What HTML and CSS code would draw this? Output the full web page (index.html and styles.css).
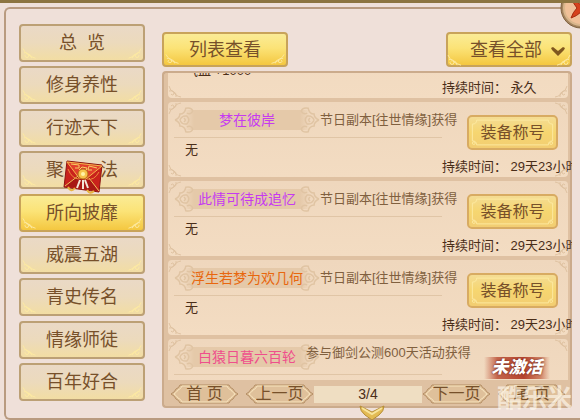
FILE: index.html
```html
<!DOCTYPE html>
<html lang="zh-CN">
    <head>
        <meta charset="utf-8">
        <title>称号</title>

        <link rel="stylesheet" href="styles.css">
    </head>

    <body>
        <svg class="symbols" aria-hidden="true">
            <symbol id="trim" viewBox="0 0 126 38" preserveAspectRatio="none">
                <g fill="none" stroke="currentColor" stroke-width="1">
                    <path d="M2 25 Q5 33 15 36 M3 30 Q7 29 8 33 Q8 36 5 35 Q3 33 5 32 M7 31 Q11 32 11 36"/>
                    <path d="M124 25 Q121 33 111 36 M123 30 Q119 29 118 33 Q118 36 121 35 Q123 33 121 32 M119 31 Q115 32 115 36"/>
                </g>
            </symbol>
            <symbol id="equip-trim" viewBox="0 0 91 35" preserveAspectRatio="none">
                <g fill="none" stroke="currentColor" stroke-width="1">
                    <path d="M8 3.5 H83 Q83 8 87.5 8 V27 Q83 27 83 31.5 H8 Q8 27 3.5 27 V8 Q8 8 8 3.5 Z"/>
                    <circle cx="5" cy="29.5" r="1.5"/>
                    <circle cx="86" cy="29.5" r="1.5"/>
                </g>
            </symbol>
            <symbol id="edge" viewBox="0 0 16 75">
                <g fill="none" stroke="currentColor" stroke-width="1">
                    <path d="M1 12 Q2 7 6 6 Q7 2 13 1 M1 7 Q6 8 6 4 Q4 2 3 4 M8 1 Q9 5 6 6"/>
                    <path d="M1 63 Q2 68 6 69 Q7 73 13 74 M1 68 Q6 67 6 71 Q4 73 3 71 M8 74 Q9 70 6 69"/>
                </g>
            </symbol>
            <symbol id="plaque" viewBox="0 0 148 28">
                <g fill="none" stroke="currentColor" stroke-width="1.5">
                    <path d="M1 14 Q6 12 6 8 Q11 8 12 2 Q18 1 19 5 Q17 9 13 7 M1 14 Q6 16 6 20 Q11 20 12 26 Q18 27 19 23 Q17 19 13 21"/>
                    <path d="M6 14 Q8 9 13 10 Q17 14 13 18 Q8 19 6 14 M10 12 Q13 14 10 16"/>
                    <path d="M147 14 Q142 12 142 8 Q137 8 136 2 Q130 1 129 5 Q131 9 135 7 M147 14 Q142 16 142 20 Q137 20 136 26 Q130 27 129 23 Q131 19 135 21"/>
                    <path d="M142 14 Q140 9 135 10 Q131 14 135 18 Q140 19 142 14 M138 12 Q135 14 138 16"/>
                </g>
            </symbol>
            <symbol id="hex" viewBox="0 0 69 20">
                <path d="M1 10 Q5 8 6 5 Q9 4 10 1 H59 Q60 4 63 5 Q64 8 68 10 Q64 12 63 15 Q60 16 59 19 H10 Q9 16 6 15 Q5 12 1 10 Z" fill="#dfc09a" stroke="#b38d62"/>
                <path d="M4 10 Q7 8 8 6 Q11 5 12 2 H57 Q58 5 61 6 Q62 8 65 10 Q62 12 61 14 Q58 15 57 18 H12 Q11 15 8 14 Q7 12 4 10 Z" fill="none" stroke="#f8e4bd"/>
            </symbol>
        </svg>

        <div class="window">
            <div class="frame">
                <nav class="tabs">
                    <button class="tab"><svg class="trim"><use href="#trim"/></svg>总&nbsp; 览</button>
                    <button class="tab"><svg class="trim"><use href="#trim"/></svg>修身养性</button>
                    <button class="tab"><svg class="trim"><use href="#trim"/></svg>行迹天下</button>
                    <button class="tab">
                        <svg class="trim"><use href="#trim"/></svg>聚　　法
                        <svg class="envelope" viewBox="0 0 42 36" aria-hidden="true">
                            <path d="M5 2 L40 6 L37 33 L2 28 Z" fill="#c9221c" stroke="#8c150f"/>
                            <path d="M3 27 L17 15 L27 17 L36 32 Z" fill="#a81814"/>
                            <path d="M5 3 L40 7 L24 20 L17 19 Z" fill="#e2402c" stroke="#f4b84c"/>
                            <path d="M3 27 L16 17 M37 32 L27 19" stroke="#f2c25a" fill="none"/>
                            <path d="M9 5 L17 6 V9 H13 M35 9 L27 7 L26 11 L30 11 M17 11 L20 8 L25 9 L24 12" stroke="#f7cf62" fill="none"/>
                            <path d="M6 10 Q10 20 17 20 M37 13 Q32 22 25 20" stroke="#ee8b3a" fill="none"/>
                            <circle cx="21" cy="15" r="5" fill="#f6c44c" stroke="#b86a1c"/>
                            <circle cx="21" cy="15" r="2" fill="#fff3a8"/>
                            <path d="M18 21 L15 29 M21 21 V30 M23 21 L26 29" stroke="#f3e6d8" stroke-width="2" fill="none"/>
                            <path d="M6 28 Q9 34 13 29 M25 31 Q28 36 32 32" stroke="#e8b440" stroke-width="2" fill="none"/>
                        </svg>
                    </button>
                    <button class="tab gold"><svg class="trim"><use href="#trim"/></svg>所向披靡</button>
                    <button class="tab"><svg class="trim"><use href="#trim"/></svg>威震五湖</button>
                    <button class="tab"><svg class="trim"><use href="#trim"/></svg>青史传名</button>
                    <button class="tab"><svg class="trim"><use href="#trim"/></svg>情缘师徒</button>
                    <button class="tab"><svg class="trim"><use href="#trim"/></svg>百年好合</button>
                </nav>

                <main class="content">
                    <div class="toolbar">
                        <button class="tool gold"><svg class="trim"><use href="#trim"/></svg>列表查看</button>
                        <div class="filter">
                            <select class="tool gold" aria-label="筛选">
                                <option>查看全部</option>
                            </select>
                            <svg class="trim"><use href="#trim"/></svg>
                            <svg class="arrow" viewBox="0 0 14 9" aria-hidden="true">
                                <path d="M0 1 L2 0 L7 4 L12 0 L14 1 L13 3 L7 9 L1 3 Z" fill="#80571f"/>
                            </svg>
                        </div>
                    </div>

                    <section class="panel">
                        <div class="list">
                            <div class="track">
                                <article class="entry">
                                    <svg class="edge"><use href="#edge"/></svg>
                                    <svg class="edge edge-right"><use href="#edge"/></svg>
                                    <div class="info">
                                        <div class="head"></div>
                                        <div class="bonus">气血 +1000</div>
                                    </div>
                                    <div class="side">
                                        <div class="time">持续时间： 永久</div>
                                    </div>
                                </article>

                                <article class="entry">
                                    <svg class="edge"><use href="#edge"/></svg>
                                    <svg class="edge edge-right"><use href="#edge"/></svg>
                                    <div class="info">
                                        <div class="head">
                                            <div class="name purple"><svg class="plaque"><use href="#plaque"/></svg>梦在彼岸</div>
                                            <div class="source">节日副本[往世情缘]获得</div>
                                        </div>
                                        <div class="bonus">无</div>
                                    </div>
                                    <div class="side">
                                        <button class="equip"><svg class="trim"><use href="#equip-trim"/></svg>装备称号</button>
                                        <div class="time">持续时间： 29天23小时</div>
                                    </div>
                                </article>

                                <article class="entry">
                                    <svg class="edge"><use href="#edge"/></svg>
                                    <svg class="edge edge-right"><use href="#edge"/></svg>
                                    <div class="info">
                                        <div class="head">
                                            <div class="name purple"><svg class="plaque"><use href="#plaque"/></svg>此情可待成追忆</div>
                                            <div class="source">节日副本[往世情缘]获得</div>
                                        </div>
                                        <div class="bonus">无</div>
                                    </div>
                                    <div class="side">
                                        <button class="equip"><svg class="trim"><use href="#equip-trim"/></svg>装备称号</button>
                                        <div class="time">持续时间： 29天23小时</div>
                                    </div>
                                </article>

                                <article class="entry">
                                    <svg class="edge"><use href="#edge"/></svg>
                                    <svg class="edge edge-right"><use href="#edge"/></svg>
                                    <div class="info">
                                        <div class="head">
                                            <div class="name orange"><svg class="plaque"><use href="#plaque"/></svg>浮生若梦为欢几何</div>
                                            <div class="source">节日副本[往世情缘]获得</div>
                                        </div>
                                        <div class="bonus">无</div>
                                    </div>
                                    <div class="side">
                                        <button class="equip"><svg class="trim"><use href="#equip-trim"/></svg>装备称号</button>
                                        <div class="time">持续时间： 29天23小时</div>
                                    </div>
                                </article>

                                <article class="entry locked">
                                    <svg class="edge"><use href="#edge"/></svg>
                                    <svg class="edge edge-right"><use href="#edge"/></svg>
                                    <div class="info">
                                        <div class="head">
                                            <div class="name pink"><svg class="plaque"><use href="#plaque"/></svg>白猿日暮六百轮</div>
                                            <div class="source">参与御剑公测600天活动获得</div>
                                        </div>
                                    </div>
                                    <div class="side">
                                        <div class="stamp">未激活</div>
                                    </div>
                                </article>
                            </div>
                        </div>

                        <div class="pager">
                            <button class="page"><svg class="hex"><use href="#hex"/></svg>首 页</button>
                            <button class="page"><svg class="hex"><use href="#hex"/></svg>上一页</button>
                            <div class="count">3/4</div>
                            <button class="page"><svg class="hex"><use href="#hex"/></svg>下一页</button>
                            <button class="page"><svg class="hex"><use href="#hex"/></svg>尾 页</button>
                        </div>

                        <svg class="more" viewBox="0 0 28 16" aria-hidden="true">
                            <path d="M2 1 L14 7 L26 1 Q26 6 21 10 L14 15 L7 10 Q2 6 2 1 Z" fill="#e3bb54" stroke="#b58d36"/>
                            <path d="M4 3 L14 9 L24 3" fill="none" stroke="#f8e49a" stroke-width="2"/>
                        </svg>
                        <div class="mark">酷乐米</div>
                    </section>
                </main>
            </div>

            <button class="close" aria-label="关闭">
                <svg viewBox="0 0 42 42" aria-hidden="true">
                    <circle cx="21" cy="21" r="20" fill="#a58560" stroke="#80613f"/>
                    <circle cx="21" cy="21" r="17" fill="#f0c098" stroke="#d9b68c" stroke-width="2"/>
                    <path d="M11 12 Q18 15 21 18 Q25 14 32 12 Q29 18 25 21 Q29 25 32 32 Q25 29 21 25 Q17 29 11 31 Q13 25 17 21 Q14 17 11 12 Z" fill="#d6421d" stroke="#a22c10"/>
                </svg>
            </button>
        </div>
    </body>
</html>
```

FILE: styles.css
```css
*
{
    box-sizing:border-box;
}

body
{
    margin:0;
    background-color:#efe0d9;
    color:#6f4b2a;
    font-family:"Liberation Sans", "Noto Sans CJK SC", sans-serif;
    font-size:13px;
    line-height:20px;
}

button, select
{
    position:relative;
    margin:0;
    padding:0;
    color:#77502a;
    font-family:inherit;
    cursor:pointer;
}

.symbols
{
    display:none;
}

.window
{
    position:relative;
    display:flex;
    height:100vh;
    padding:4px 0 0 4px;
    border-top:3px solid #8c7440;
    overflow:hidden;
}

.frame
{
    flex:1;
    display:flex;
    gap:17px;
    min-width:0;
    padding:15px 8px 10px 13px;
    border:2px solid #b99b80;
    border-right:0;
    border-radius:6px 0 0 6px;
}

/* shared button ornament */
.trim
{
    position:absolute;
    top:0;
    left:0;
    width:100%;
    height:100%;
    color:#fdeaa2;
    pointer-events:none;
}

/* left tabs */
.tabs
{
    display:flex;
    flex-direction:column;
    justify-content:space-between;
    padding-bottom:7px;
}

.tab, .tool
{
    width:126px;
    height:38px;
    border:2px solid #bca075;
    border-radius:4px;
    background:linear-gradient(#ead9c6, #ecdabc 50%, #f2dda3);
    font-size:18px;
    line-height:24px;
}

.tool
{
    height:35px;
}

.gold
{
    border-color:#c8a35a;
    background:linear-gradient(#faeb96, #fbe377 45%, #f4c740);
}

.envelope
{
    position:absolute;
    top:6px;
    left:41px;
    width:42px;
    height:36px;
}

/* right side */
.content
{
    flex:1;
    display:flex;
    flex-direction:column;
    gap:4px;
    min-width:0;
    padding-top:8px;
}

.toolbar
{
    display:flex;
    justify-content:space-between;
}

.filter
{
    position:relative;
}

.filter select
{
    display:block;
    padding-left:22px;
    appearance:none;
}

.arrow
{
    position:absolute;
    top:15px;
    right:7px;
    width:14px;
    height:9px;
    pointer-events:none;
}

.panel
{
    position:relative;
    flex:1;
    display:flex;
    flex-direction:column;
    min-height:0;
    border:2px solid #cbab8c;
    border-right:0;
    border-radius:4px;
    background-color:#dfc1a2;
    box-shadow:inset -2px 0 0 #cbab8c;
}

.list
{
    flex:1;
    min-height:0;
    overflow:hidden;
}

.track
{
    display:flex;
    flex-direction:column;
    gap:4px;
    margin-top:-50px;
    padding:0 4px;
}

.entry
{
    position:relative;
    flex:none;
    display:flex;
    height:75px;
    border-radius:4px;
    background:linear-gradient(#efd7bd, #f3dcc2);
}

.edge
{
    position:absolute;
    top:0;
    left:0;
    width:16px;
    height:75px;
    color:#dfc2a1;
}

.edge-right
{
    left:auto;
    right:0;
    transform:scaleX(-1);
}

.info
{
    flex:1;
    min-width:0;
    padding-left:6px;
}

.head
{
    display:flex;
    align-items:center;
    height:36px;
    border-bottom:1px solid #e0c5a6;
    white-space:nowrap;
}

.name
{
    position:relative;
    flex:none;
    width:146px;
    height:20px;
    background:linear-gradient(to right, transparent 10px, #e5c9a9 20px, #e5c9a9 126px, transparent 136px);
    font-size:14px;
    text-align:center;
}

.plaque
{
    position:absolute;
    top:-4px;
    left:0;
    width:100%;
    height:28px;
    color:#e0c4a3;
    z-index:-1;
}

.name
{
    z-index:0;
}

.purple
{
    color:#c63bf0;
}

.orange
{
    color:#e8670f;
}

.pink
{
    color:#ef4f8c;
}

.source
{
    color:#80603f;
}

.bonus
{
    padding:2px 0 0 11px;
    color:#4a2d18;
}

.side
{
    flex:none;
    display:flex;
    flex-direction:column;
    justify-content:flex-end;
    gap:7px;
    width:126px;
}

.equip
{
    align-self:flex-end;
    width:91px;
    height:35px;
    margin-right:10px;
    border:2px solid #d8ab62;
    border-radius:5px;
    background:linear-gradient(#f4dc94, #f6d670 50%, #f2cd72);
    font-size:16px;
    line-height:24px;
}

.time
{
    color:#4a2d18;
    white-space:nowrap;
}

/* title that is not unlocked yet */
.locked .source
{
    margin-left:-14px;
    padding-bottom:8px;
    z-index:1;
}

.locked .side
{
    justify-content:flex-start;
    padding-top:18px;
}

.stamp
{
    align-self:flex-end;
    width:66px;
    margin-right:18px;
    background:linear-gradient(to right, transparent, #c4664c 20%, #b5442f 60%, #cf8062 85%, transparent);
    color:#ffffff;
    font-size:17px;
    font-style:italic;
    font-weight:900;
    line-height:22px;
    text-align:center;
    text-shadow:0 0 2px #5c1710;
}

/* page switch */
.pager
{
    display:flex;
    align-items:center;
    gap:6px;
    padding:4px 6px 2px 6px;
}

.page
{
    width:69px;
    height:20px;
    border:0;
    background:none;
    font-size:16px;
    line-height:20px;
    z-index:1;
}

.hex
{
    position:absolute;
    top:0;
    left:0;
    width:69px;
    height:20px;
    z-index:-1;
}

.count
{
    flex:1;
    height:17px;
    margin:0 -6px;
    background-color:#efdec2;
    color:#4a2d18;
    font-size:14px;
    line-height:17px;
    text-align:center;
}

.more
{
    position:absolute;
    bottom:-15px;
    left:50%;
    width:28px;
    height:16px;
    margin-left:-10px;
}

.mark
{
    position:absolute;
    right:0;
    bottom:-6px;
    z-index:2;
    color:rgba(255, 250, 240, 0.65);
    font-size:25px;
    font-weight:bold;
    line-height:28px;
    pointer-events:none;
}

.close
{
    position:absolute;
    top:-16px;
    right:-22px;
    width:42px;
    height:42px;
    border:0;
    background:none;
}
```
